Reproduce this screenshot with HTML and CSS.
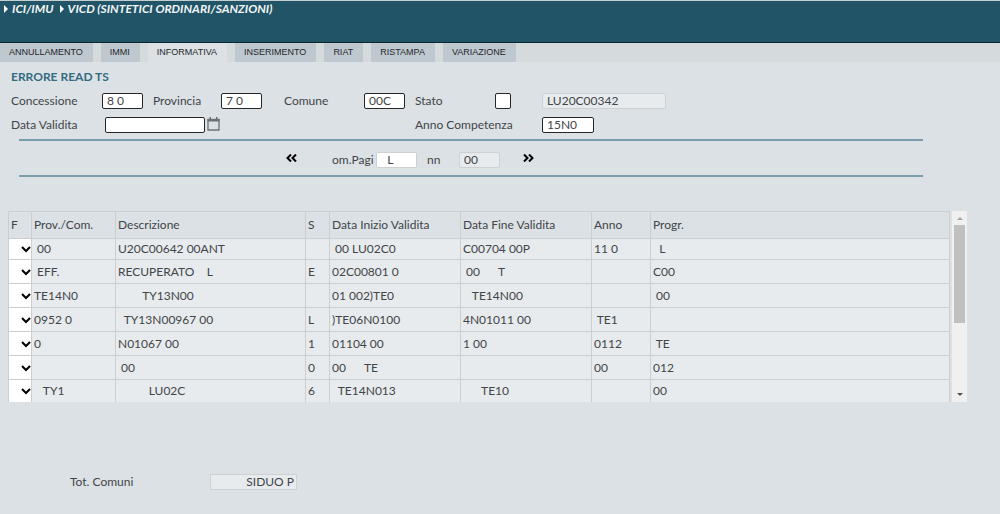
FILE: index.html
```html
<!DOCTYPE html>
<html lang="it">
<head>
<meta charset="utf-8">
<title>VICD (Sintetici ordinari/sanzioni)</title>
<link rel="stylesheet" href="styles.css">
</head>
<body>
<header class="topbar">
  <nav class="crumbs">
    <a href="#"><svg class="caret" viewBox="0 0 4 8"><path d="M0 0L4 4L0 8Z"/></svg>ICI/IMU</a>
    <a href="#"><svg class="caret" viewBox="0 0 4 8"><path d="M0 0L4 4L0 8Z"/></svg>VICD (SINTETICI ORDINARI/SANZIONI)</a>
  </nav>
</header>
<nav class="tabs">
  <button type="button">ANNULLAMENTO</button>
  <button type="button">IMMI</button>
  <button type="button" class="active">INFORMATIVA</button>
  <button type="button">INSERIMENTO</button>
  <button type="button">RIAT</button>
  <button type="button">RISTAMPA</button>
  <button type="button">VARIAZIONE</button>
</nav>
<main>
  <h1 class="message">ERRORE READ TS</h1>
  <form class="filters">
    <label for="conc">Concessione</label>
    <input id="conc" class="short" value="8 0">
    <label for="prov">Provincia</label>
    <input id="prov" class="short" value="7 0">
    <label for="com">Comune</label>
    <input id="com" class="short" value="00C">
    <label for="stato">Stato</label>
    <input id="stato" class="tiny">
    <input class="wide" aria-label="Descrizione stato" value="LU20C00342" readonly>
    <label for="data">Data Validita</label>
    <div class="date">
      <input id="data">
      <button type="button" aria-label="Calendario"><svg viewBox="0 0 13 14"><path d="M1 2.500H12V13H1Z" fill="none" stroke="#6d7174" stroke-width="1.3"/><path d="M.5 2H12.500V4.500H.5ZM2.500 0H4V3H2.500ZM9 0H10.500V3H9Z" fill="#6d7174"/></svg></button>
    </div>
    <label for="anno" class="span">Anno Competenza</label>
    <input id="anno" class="year" value="15N0">
  </form>
  <section class="pager">
    <button type="button" aria-label="Precedente"><svg viewBox="0 0 11 8"><path d="M5 .5L1.5 4L5 7.5M10 .5L6.5 4L10 7.5"/></svg></button>
    <label for="pag">om.Pagi</label>
    <input id="pag" class="short page" value="  L">
    <label for="tot">nn</label>
    <input id="tot" class="short" value="00" readonly>
    <button type="button" aria-label="Successiva"><svg viewBox="0 0 11 8"><path d="M1 .5L4.500 4L1 7.5M6 .5L9.500 4L6 7.5"/></svg></button>
  </section>
  <section class="grid">
    <table>
      <colgroup><col class="c-f"><col class="c-prov"><col class="c-desc"><col class="c-s"><col class="c-date"><col class="c-date"><col class="c-anno"><col></colgroup>
      <thead><tr><th>F</th><th>Prov./Com.</th><th>Descrizione</th><th>S</th><th>Data Inizio Validita</th><th>Data Fine Validita</th><th>Anno</th><th>Progr.</th></tr></thead>
      <tbody>
        <tr><td><select aria-label="F riga 1"><option></option></select></td><td> 00</td><td>U20C00642 00ANT</td><td></td><td> 00 LU02C0</td><td>C00704 00P</td><td>11 0</td><td>  L</td></tr>
        <tr><td><select aria-label="F riga 2"><option></option></select></td><td> EFF.</td><td>RECUPERATO    L</td><td>E</td><td>02C00801 0</td><td> 00      T</td><td></td><td>C00</td></tr>
        <tr><td><select aria-label="F riga 3"><option></option></select></td><td>TE14N0</td><td>        TY13N00</td><td></td><td>01 002)TE0</td><td>   TE14N00</td><td></td><td> 00</td></tr>
        <tr><td><select aria-label="F riga 4"><option></option></select></td><td>0952 0</td><td>  TY13N00967 00</td><td>L</td><td>)TE06N0100</td><td>4N01011 00</td><td> TE1</td><td></td></tr>
        <tr><td><select aria-label="F riga 5"><option></option></select></td><td>0</td><td>N01067 00</td><td>1</td><td>01104 00</td><td>1 00</td><td>0112</td><td> TE</td></tr>
        <tr><td><select aria-label="F riga 6"><option></option></select></td><td></td><td> 00</td><td>0</td><td>00      TE</td><td></td><td>00</td><td>012</td></tr>
        <tr><td><select aria-label="F riga 7"><option></option></select></td><td>   TY1</td><td>          LU02C</td><td>6</td><td>  TE14N013</td><td>      TE10</td><td></td><td>00</td></tr>
      </tbody>
    </table>
    <div class="scroll">
      <svg viewBox="0 0 6 3"><path d="M0 3L3 0L6 3Z" fill="#a3a3a3"/></svg>
      <div class="track"><div class="thumb"></div></div>
      <svg viewBox="0 0 6 3"><path d="M0 0L3 3L6 0Z" fill="#505050"/></svg>
    </div>
  </section>
  <section class="total">
    <label for="totcom">Tot. Comuni</label>
    <input id="totcom" value="SIDUO P" readonly>
  </section>
</main>
</body>
</html>
```
FILE: styles.css
```css
* { box-sizing: border-box; }
body {
  margin: 0;
  background: #dce1e5;
  color: #424548;
  font: 12px/16px Lato, "Noto Sans", sans-serif;
}
button, input, select { font: inherit; color: inherit; margin: 0; }
button { border: 0; padding: 0; background: none; }
button svg { display: block; }
.topbar {
  height: 43px;
  background: #205466;
  border-top: 1px solid #c5cfd0;
  border-bottom: 1px solid #0c2630;
}
.crumbs { display: flex; gap: 6px; padding-left: 4px; }
.crumbs a {
  display: flex;
  align-items: center;
  gap: 4px;
  color: #f2f6f7;
  font-style: italic;
  font-weight: 700;
  text-decoration: none;
}
.caret { width: 4px; height: 8px; fill: #fff; }
.tabs { display: flex; gap: 8px; height: 19px; background: #d5dadd; }
.tabs button {
  padding: 0 10px 0 9px;
  background: #bfc7cf;
  color: #24282b;
  font: 9px/19px "Liberation Sans", Arial, sans-serif;
}
.tabs .active { background: #dce1e5; }
.message {
  margin: 0;
  padding: 7px 11px 8px;
  font-size: 12px;
  font-weight: 700;
  line-height: 16px;
  color: #336b80;
}
input {
  height: 16px;
  width: 100%;
  min-width: 0;
  padding: 0 4px;
  border: 1px solid #25282a;
  border-radius: 2px;
  background: #fff;
  outline: 0;
}
input[readonly] { background: #e7ebee; border-color: #cdd1d3; }
.short { width: 41px; }
.tiny { width: 16px; }
.wide { width: 124px; }
.year { width: 52px; }
.filters {
  display: grid;
  grid-template-columns: 91px 51px 68px 63px 80px 51px 80px 47px 1fr;
  row-gap: 8px;
  padding-left: 11px;
}
.date { grid-column: span 5; display: flex; gap: 2px; padding-left: 3px; }
.date input { width: 100px; }
.date button, .date svg { width: 13px; height: 14px; }
.span { grid-column: span 2; }
.pager {
  display: flex;
  align-items: center;
  height: 38px;
  margin: 6px 77px 0 19px;
  padding: 4px 0 0 267px;
  border: solid #7b9cab;
  border-width: 2px 0;
}
.pager svg { width: 11px; height: 8px; margin-bottom: 4px; fill: none; stroke: #000; stroke-width: 2; }
.pager label { width: 44px; margin-left: 35px; }
.pager label + input { flex: none; }
.pager .page { margin-right: 10px; border-color: #cdd1d3; }
.pager .page + label { width: 32px; margin-left: 0; }
.pager input + button { margin-left: 23px; }
.grid { display: flex; gap: 2px; margin: 34px 33px 0 8px; }
table { flex: 1; border-collapse: collapse; table-layout: fixed; width: 0; }
.c-f { width: 23px; }
.c-prov { width: 84px; }
.c-desc { width: 190px; }
.c-s { width: 24px; }
.c-date { width: 131px; }
.c-anno { width: 59px; }
th, td { padding: 0 2px; border: 1px solid #cbcfd1; text-align: left; font-weight: 400; white-space: pre; }
th { height: 27px; }
td { height: 24px; background: #e7ebee; }
tbody tr:first-child td { height: 21px; }
tbody tr:last-child td { height: 22px; border-bottom: 0; }
td:first-child { padding: 0; background: #fff; }
select { display: block; width: calc(100% + 3px); height: 20px; border: 0; background: transparent; color: #000; }
.scroll {
  display: flex;
  flex-direction: column;
  align-items: center;
  width: 15px;
  padding: 6px 2px;
  background: #f0f0f0;
}
.scroll svg { width: 6px; height: 3px; }
.track { flex: 1; width: 100%; padding: 5px 0; }
.thumb { height: 60%; background: #c0c0c0; }
.total { display: flex; margin-top: 72px; padding-left: 70px; }
.total label { width: 140px; }
.total input { width: 87px; padding: 0 2px; border-radius: 0; text-align: right; }
```
